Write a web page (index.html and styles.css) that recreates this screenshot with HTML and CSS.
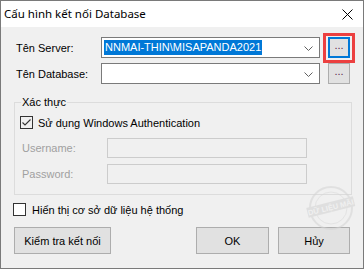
FILE: index.html
```html
<!DOCTYPE html>
<html lang="vi">
<head>
  <meta charset="UTF-8">
  <title>Cấu hình kết nối Database</title>
  <link rel="stylesheet" href="styles.css">
</head>
<body>

<div class="cua-so">
  <div class="thanh-tieu-de">
    <span class="tieu-de">Cấu hình kết nối Database</span>
    <svg class="nut-dong" width="11" height="11" viewBox="0 0 11 11">
      <path d="M0.5 0.5 L10.5 10.5 M10.5 0.5 L0.5 10.5" stroke="#000" stroke-width="1" fill="none"/>
    </svg>
  </div>

  <div class="noi-dung">
    <!-- Server -->
    <div class="dong">
      <label class="nhan">Tên Server:</label>
      <div class="combo">
        <span class="chon">NNMAI-THIN\MISAPANDA2021</span>
        <svg class="mui-ten" width="9" height="5" viewBox="0 0 9 5">
          <path d="M0.5 0.5 L4.5 4.5 L8.5 0.5" stroke="#606060" fill="none"/>
        </svg>
      </div>
      <div class="nut-ba-cham-wrap">
        <button class="nut-ba-cham focus">...</button>
        <div class="khung-do"></div>
      </div>
    </div>

    <!-- Database -->
    <div class="dong dong-2">
      <label class="nhan">Tên Database:</label>
      <div class="combo">
        <svg class="mui-ten" width="9" height="5" viewBox="0 0 9 5">
          <path d="M0.5 0.5 L4.5 4.5 L8.5 0.5" stroke="#606060" fill="none"/>
        </svg>
      </div>
      <div class="nut-ba-cham-wrap">
        <button class="nut-ba-cham">...</button>
      </div>
    </div>

    <!-- Xác thực -->
    <div class="nhom">
      <div class="nhom-tieu-de">Xác thực</div>
      <div class="check-dong check-trong">
        <span class="hop-check">
          <svg width="11" height="11" viewBox="0 0 11 11">
            <path d="M1.5 5.5 L4 8 L9.5 2.5" stroke="#333" stroke-width="1.1" fill="none"/>
          </svg>
        </span>
        <span>Sử dụng Windows Authentication</span>
      </div>
      <div class="dong-tat">
        <label class="nhan-tat">Username:</label>
        <div class="o-tat"></div>
      </div>
      <div class="dong-tat dong-mk">
        <label class="nhan-tat">Password:</label>
        <div class="o-tat"></div>
      </div>
    </div>

    <div class="check-dong check-duoi">
      <span class="hop-check"></span>
      <span>Hiển thị cơ sở dữ liệu hệ thống</span>
    </div>

    <div class="hang-nut">
      <button class="nut nut-kiem-tra">Kiểm tra kết nối</button>
      <button class="nut nut-ok">OK</button>
      <button class="nut nut-huy">Hủy</button>
    </div>

    <!-- Dấu mờ -->
    <svg class="dau-moc" width="56" height="48" viewBox="0 0 56 48">
      <circle cx="28" cy="26" r="21" stroke="#d4d4d4" stroke-width="2" fill="none"/>
      <circle cx="28" cy="26" r="16" stroke="#dadada" stroke-width="1" fill="none"/>
      <g transform="rotate(-14 28 26)">
        <rect x="4" y="20" width="48" height="10" fill="#d2d2d2"/>
        <text x="28" y="28" font-family="Liberation Sans, sans-serif" font-size="7.5" font-weight="bold" fill="#f0f0f0" text-anchor="middle">DỮ LIỆU MÃI</text>
      </g>
    </svg>
  </div>
</div>

</body>
</html>
```

FILE: styles.css
```css
/* Hộp thoại cấu hình kết nối */
body {
  margin: 0;
  font-family: "Liberation Sans", Arial, sans-serif;
  font-size: 11px;
  color: #000;
}
.cua-so {
  width: 364px;
  height: 269px;
  box-sizing: border-box;
  border: 1px solid #7a7a7a;
  background: #f0f0f0;
  position: relative;
  overflow: hidden;
}
.thanh-tieu-de {
  height: 26px;
  background: #fff;
  display: flex;
  align-items: center;
  justify-content: space-between;
  padding: 0 10px 0 3px;
}
.tieu-de {
  font-family: "Noto Sans", sans-serif;
  font-size: 11.5px;
  margin-top: -1px;
}
.nut-dong {
  display: block;
  margin-top: 1px;
}
.noi-dung {
  position: relative;
  height: 240px;
}
.dong {
  display: flex;
  align-items: center;
  margin: 10px 0 0 15px;
  height: 21px;
}
.dong-2 {
  margin-top: 5px;
}
.nhan {
  width: 85px;
}
.combo {
  width: 219px;
  height: 21px;
  box-sizing: border-box;
  border: 1px solid #7a7a7a;
  background: #fff;
  display: flex;
  align-items: center;
  position: relative;
}
.chon {
  margin-left: 2px;
  background: #0078d7;
  color: #fff;
  line-height: 15px;
  padding: 0 1px;
}
.mui-ten {
  position: absolute;
  right: 6px;
  top: 8px;
}
.nut-ba-cham-wrap {
  margin-left: 8px;
  position: relative;
}
.nut-ba-cham {
  display: block;
  width: 22px;
  height: 21px;
  box-sizing: border-box;
  border: 1px solid #adadad;
  background: #e1e1e1;
  font-family: "Liberation Sans", Arial, sans-serif;
  font-size: 11px;
  color: #5a2a4a;
  padding: 0 0 4px;
  line-height: 13px;
}
.nut-ba-cham.focus {
  border: 2px solid #0078d7;
}
.khung-do {
  position: absolute;
  left: -5px;
  top: -4px;
  width: 32px;
  height: 30px;
  box-sizing: border-box;
  border: 3px solid #ec4040;
}
.nhom {
  margin: 18px 0 0 13px;
  width: 338px;
  height: 93px;
  box-sizing: border-box;
  border: 1px solid #dcdcdc;
}
.nhom-tieu-de {
  display: table;
  margin: -7px 0 0 6px;
  padding: 0 1px;
  line-height: 13px;
  background: #f0f0f0;
}
.check-dong {
  display: flex;
  align-items: center;
  height: 13px;
}
.check-trong {
  margin: 7px 0 0 5px;
}
.hop-check {
  width: 13px;
  height: 13px;
  box-sizing: border-box;
  border: 1px solid #333;
  background: #fff;
  margin-right: 5px;
  display: flex;
  align-items: center;
  justify-content: center;
}
.check-trong .hop-check {
  background: #f0f0f0;
}
.dong-tat {
  display: flex;
  align-items: center;
  margin: 9px 0 0 7px;
}
.dong-mk {
  margin-top: 6px;
}
.nhan-tat {
  width: 85px;
  color: #a0a0a0;
}
.o-tat {
  width: 200px;
  height: 20px;
  box-sizing: border-box;
  border: 1px solid #cccccc;
  background: #f0f0f0;
}
.check-duoi {
  margin: 8px 0 0 12px;
}
.check-duoi .hop-check {
  margin-right: 6px;
}
.hang-nut {
  display: flex;
  margin: 11px 0 0 13px;
}
.nut {
  height: 27px;
  box-sizing: border-box;
  border: 1px solid #adadad;
  background: #e1e1e1;
  font-family: "Liberation Sans", Arial, sans-serif;
  font-size: 11px;
  color: #000;
  padding: 0;
}
.nut-kiem-tra {
  width: 97px;
}
.nut-ok {
  width: 73px;
  margin-left: 85px;
}
.nut-huy {
  width: 72px;
  margin-left: 9px;
}
.dau-moc {
  position: absolute;
  left: 302px;
  top: 145px;
  opacity: 0.55;
}
```
